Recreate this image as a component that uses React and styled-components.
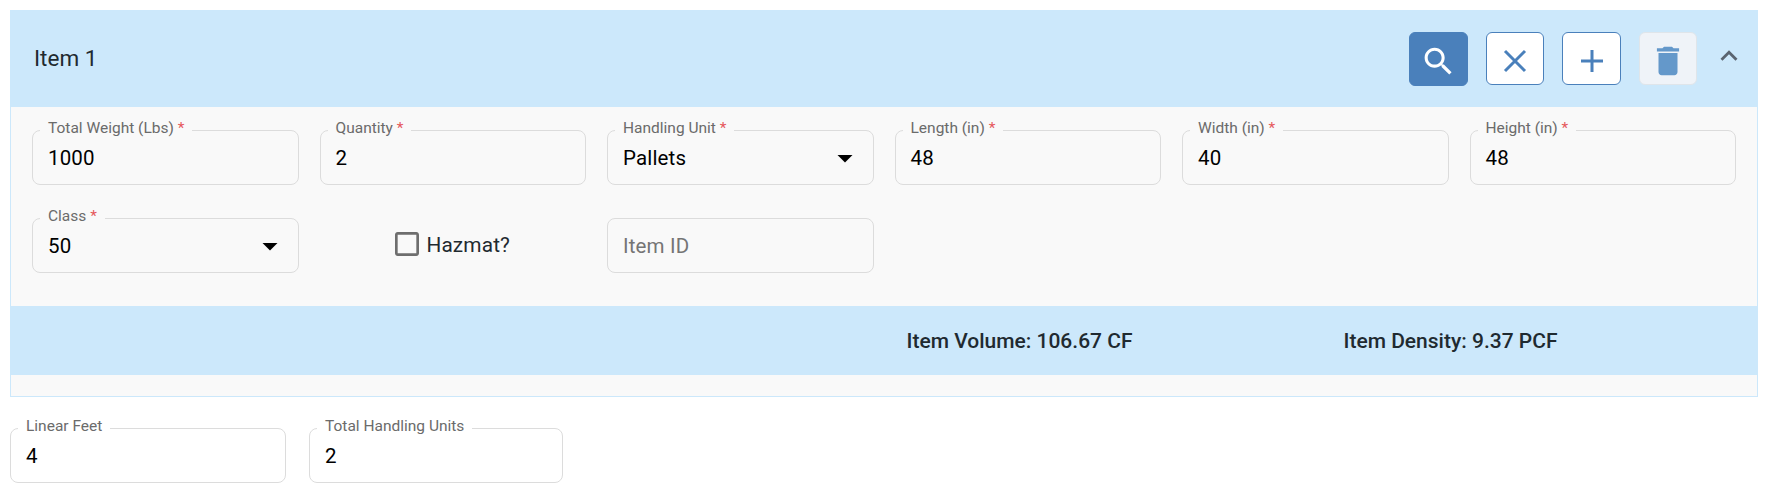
import React from 'react'
import styled, { createGlobalStyle } from 'styled-components'

const GlobalStyle = createGlobalStyle`
    body {
        margin: 0;
        background: #fff;
        font-family: Roboto, "Liberation Sans", sans-serif;
    }
`

const Page = styled.div`
    padding: 10px 12px 0 10px;
`

const Card = styled.section`
    border: 1px solid #cce8fb;
    background: #f9f9f9;
    padding-bottom: 21px;
`

const Header = styled.header`
    display: flex;
    align-items: center;
    justify-content: space-between;
    box-sizing: border-box;
    height: 97px;
    margin: -1px -1px 0;
    padding: 1px 12px 0 24px;
    background: #cce8fb;
`

const Title = styled.h2`
    margin: -2px 0 0;
    font-size: 22.5px;
    font-weight: 400;
    color: #1f2a30;
`

const Actions = styled.div`
    display: flex;
    align-items: flex-start;
    gap: 18px;
`

const ActionButton = styled.button`
    display: flex;
    align-items: center;
    justify-content: center;
    box-sizing: border-box;
    width: ${(p) => p.$width || 59}px;
    height: ${(p) => (p.$variant === 'solid' ? 54 : 53)}px;
    padding: 4px 0 0;
    border-radius: 6px;
    border: 1px solid ${(p) => (p.$variant === 'disabled' ? '#dfe5ea' : '#4a80bb')};
    background: ${(p) =>
        p.$variant === 'solid' ? '#4a80bb' : p.$variant === 'disabled' ? '#eff3f8' : '#fff'};
    color: ${(p) =>
        p.$variant === 'solid' ? '#fff' : p.$variant === 'disabled' ? '#6498ca' : '#4a80bb'};
`

const Collapse = styled.svg`
    width: 34px;
    height: 34px;
    margin: 7px 0 0 -3px;
    fill: #5a6470;
`

const FieldGrid = styled.div`
    display: grid;
    grid-template-columns: repeat(6, 1fr);
    column-gap: 21px;
    row-gap: 25px;
    padding: 15px 21px 33px;
`

const Box = styled.fieldset`
    min-width: 0;
    height: 63px;
    margin: 0;
    padding: 0 15px;
    box-sizing: border-box;
    display: flex;
    border: 1px solid #dcdcdc;
    border-radius: 8px;
`

const Legend = styled.legend`
    margin-left: -8px;
    padding: 0 8px 4px;
    font-size: 15.5px;
    line-height: 12px;
    color: #6b6b6b;
    white-space: nowrap;
`

const Star = styled.span`
    color: #e5575b;
`

const Control = styled.div`
    display: flex;
    align-items: center;
    justify-content: space-between;
    width: 100%;
    height: 36px;
    margin-top: 2px;
    font-size: 20.5px;
    letter-spacing: 0.15px;
    color: #000;
`

const Arrow = styled.svg`
    width: 36px;
    height: 36px;
    margin-right: -5px;
    fill: #000;
`

const PlainBox = styled.div`
    height: 55px;
    margin-top: 8px;
    padding: 0 15px;
    box-sizing: border-box;
    display: flex;
    align-items: center;
    border: 1px solid #dcdcdc;
    border-radius: 8px;
    font-size: 20.5px;
    letter-spacing: 0.15px;
    color: #757575;
`

const CheckRow = styled.label`
    display: flex;
    align-items: center;
    justify-content: center;
    gap: 3px;
    padding: 6px 4px 0 0;
    font-size: 20.8px;
    letter-spacing: 0.15px;
    color: #1f2a30;
`

const CheckIcon = styled.svg`
    width: 32px;
    height: 32px;
    margin-top: -1px;
    fill: #6e6e6e;
`

const Summary = styled.div`
    display: grid;
    grid-template-columns: repeat(2, 431px);
    align-items: center;
    height: 69px;
    padding-left: 793px;
    background: #cce8fb;
`

const SummaryItem = styled.span`
    justify-self: center;
    font-size: 21px;
    font-weight: 500;
    color: #1f2a30;
`

const Totals = styled.div`
    display: flex;
    gap: 23px;
    padding-top: 23px;
`

const TotalField = styled.div`
    width: ${(p) => p.$width}px;
`

const Field = ({ label, required, value, select }) => (
    <Box>
        <Legend>
            {label}
            {required && <Star> *</Star>}
        </Legend>
        <Control>
            {value}
            {select && (
                <Arrow viewBox="0 0 24 24">
                    <path d="M7 10l5 5 5-5z" />
                </Arrow>
            )}
        </Control>
    </Box>
)

export default function App() {
    return (
        <Page>
            <GlobalStyle />
            <Card>
                <Header>
                    <Title>Item 1</Title>
                    <Actions>
                        <ActionButton $variant="solid">
                            <svg width="37" height="37" viewBox="0 0 24 24" fill="currentColor">
                                <path d="M15.5 14h-.79l-.28-.27C15.41 12.59 16 11.11 16 9.5 16 5.91 13.09 3 9.5 3S3 5.91 3 9.5 5.91 16 9.5 16c1.61 0 3.09-.59 4.23-1.57l.27.28v.79l5 4.99L20.49 19l-4.99-5zm-6 0C7.01 14 5 11.99 5 9.5S7.01 5 9.5 5 14 7.01 14 9.5 11.99 14 9.5 14z" />
                            </svg>
                        </ActionButton>
                        <ActionButton $width={58}>
                            <svg width="36" height="36" viewBox="0 0 36 36" stroke="currentColor" strokeWidth="3" fill="none">
                                <path d="M8 8l20 20M28 8L8 28" />
                            </svg>
                        </ActionButton>
                        <ActionButton>
                            <svg width="36" height="36" viewBox="0 0 36 36" stroke="currentColor" strokeWidth="3" fill="none">
                                <path d="M18 7v22M7 18h22" />
                            </svg>
                        </ActionButton>
                        <ActionButton $variant="disabled" $width={58}>
                            <svg width="38" height="38" viewBox="0 0 24 24" fill="currentColor">
                                <path d="M6 19c0 1.1.9 2 2 2h8c1.1 0 2-.9 2-2V7H6v12zM19 4h-3.5l-1-1h-5l-1 1H5v2h14V4z" />
                            </svg>
                        </ActionButton>
                        <Collapse viewBox="0 0 24 24">
                            <path d="M12 8l-6 6 1.41 1.41L12 10.83l4.59 4.58L18 14z" />
                        </Collapse>
                    </Actions>
                </Header>
                <FieldGrid>
                    <Field label="Total Weight (Lbs)" required value="1000" />
                    <Field label="Quantity" required value="2" />
                    <Field label="Handling Unit" required value="Pallets" select />
                    <Field label="Length (in)" required value="48" />
                    <Field label="Width (in)" required value="40" />
                    <Field label="Height (in)" required value="48" />
                    <Field label="Class" required value="50" select />
                    <CheckRow>
                        <CheckIcon viewBox="0 0 24 24">
                            <path d="M19 5v14H5V5h14m0-2H5c-1.1 0-2 .9-2 2v14c0 1.1.9 2 2 2h14c1.1 0 2-.9 2-2V5c0-1.1-.9-2-2-2z" />
                        </CheckIcon>
                        Hazmat?
                    </CheckRow>
                    <PlainBox>Item ID</PlainBox>
                </FieldGrid>
                <Summary>
                    <SummaryItem>Item Volume: 106.67 CF</SummaryItem>
                    <SummaryItem>Item Density: 9.37 PCF</SummaryItem>
                </Summary>
            </Card>
            <Totals>
                <TotalField $width={276}>
                    <Field label="Linear Feet" value="4" />
                </TotalField>
                <TotalField $width={254}>
                    <Field label="Total Handling Units" value="2" />
                </TotalField>
            </Totals>
        </Page>
    )
}
